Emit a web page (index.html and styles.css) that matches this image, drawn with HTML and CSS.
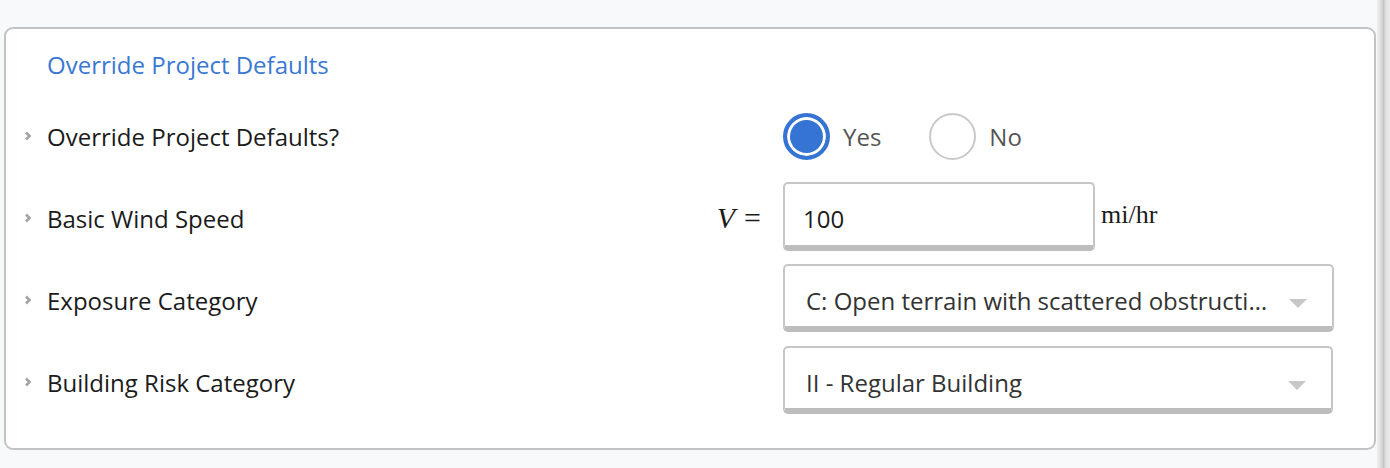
FILE: index.html
```html
<!DOCTYPE html>
<html lang="en">
<head>
  <meta charset="UTF-8">
  <meta name="viewport" content="width=device-width, initial-scale=1.0">
  <title>Wind Load Settings</title>
  <link rel="stylesheet" href="styles.css">
</head>
<body>
  <div class="page">
    <main class="main">
      <section class="card">
        <h2 class="card-title">Override Project Defaults</h2>

        <div class="row row-radio">
          <div class="label">
            <svg class="chev" width="8" height="12" viewBox="0 0 8 12"><polyline points="2,2.5 5.5,6 2,9.5" /></svg>
            <span>Override Project Defaults?</span>
          </div>
          <div class="control">
            <label class="radio">
              <span class="dot checked"></span>
              <span class="radio-text">Yes</span>
            </label>
            <label class="radio">
              <span class="dot"></span>
              <span class="radio-text">No</span>
            </label>
          </div>
        </div>

        <div class="row">
          <div class="label">
            <svg class="chev" width="8" height="12" viewBox="0 0 8 12"><polyline points="2,2.5 5.5,6 2,9.5" /></svg>
            <span>Basic Wind Speed</span>
          </div>
          <div class="math"><i>V</i><span class="eq">=</span></div>
          <div class="control">
            <div class="field"><input type="text" value="100"></div>
            <span class="unit">mi/hr</span>
          </div>
        </div>

        <div class="row">
          <div class="label">
            <svg class="chev" width="8" height="12" viewBox="0 0 8 12"><polyline points="2,2.5 5.5,6 2,9.5" /></svg>
            <span>Exposure Category</span>
          </div>
          <div class="control">
            <div class="select">
              <span class="select-text">C: Open terrain with scattered obstructions</span>
              <svg class="caret" width="18" height="9" viewBox="0 0 18 9"><polygon points="0,0 18,0 9,9" /></svg>
            </div>
          </div>
        </div>

        <div class="row">
          <div class="label">
            <svg class="chev" width="8" height="12" viewBox="0 0 8 12"><polyline points="2,2.5 5.5,6 2,9.5" /></svg>
            <span>Building Risk Category</span>
          </div>
          <div class="control">
            <div class="select">
              <span class="select-text">II - Regular Building</span>
              <svg class="caret" width="18" height="9" viewBox="0 0 18 9"><polygon points="0,0 18,0 9,9" /></svg>
            </div>
          </div>
        </div>
      </section>
    </main>
    <div class="edge"></div>
  </div>
</body>
</html>
```

FILE: styles.css
```css
html, body {
  margin: 0;
  padding: 0;
}
body {
  font-family: "Open Sans", "Noto Sans", Arial, sans-serif;
  background: #f8f9fb;
  color: #1b1b1b;
}
.page {
  display: flex;
  height: 468px;
}
.main {
  flex: 1;
  padding: 27px 1px 0 4px;
}
.edge {
  width: 13px;
  background: linear-gradient(to right, #f1f1f1 0%, #d9d9d9 35%, #c6c6c6 50%, #e2e2e2 70%, #ececec 100%);
}
.card {
  background: #fff;
  border: 2px solid #c3c3c3;
  border-radius: 9px;
  height: 423px;
  box-sizing: border-box;
  padding: 21px 41px 0 41px;
}
.card-title {
  margin: 0 0 19px 0;
  font-size: 24px;
  font-weight: 400;
  color: #3a78d4;
  line-height: 30px;
}
.row {
  display: flex;
  align-items: center;
  height: 68px;
  margin-bottom: 14px;
}
.row-radio {
  height: 74px;
  margin-bottom: 9px;
}
.label {
  flex: 1;
  display: flex;
  align-items: center;
  font-size: 24px;
  position: relative;
  top: 2px;
}
.row-radio .label {
  top: 0;
}
.chev {
  margin-left: -23px;
  margin-right: 15px;
}
.chev polyline {
  fill: none;
  stroke: #a3a3a3;
  stroke-width: 2.6;
}
.control {
  width: 550px;
  display: flex;
  align-items: center;
}
.radio {
  display: flex;
  align-items: center;
  margin-right: 48px;
}
.dot {
  width: 47px;
  height: 47px;
  box-sizing: border-box;
  border-radius: 50%;
  border: 2px solid #c9c9c9;
  background: #fff;
  margin-right: 13px;
}
.dot.checked {
  border: 4px solid #3574d3;
  background: #3574d3;
  box-shadow: inset 0 0 0 3px #fff;
}
.radio-text {
  font-size: 24px;
  color: #555;
}
.math {
  font-family: "Liberation Serif", "DejaVu Serif", serif;
  font-size: 30px;
  margin-right: 22px;
  display: flex;
  align-items: center;
  position: relative;
  top: 2px;
}
.math i {
  margin-right: 9px;
}
.field {
  width: 312px;
  height: 69px;
  box-sizing: border-box;
  border: 2px solid #c6c6c6;
  border-bottom: 6px solid #bdbdbd;
  border-radius: 5px;
  display: flex;
  align-items: center;
}
.field input {
  border: none;
  outline: none;
  width: 100%;
  font-family: inherit;
  font-size: 24px;
  color: #1b1b1b;
  padding: 9px 0 0 18px;
  background: transparent;
}
.unit {
  font-family: "Liberation Serif", "DejaVu Serif", serif;
  font-size: 26px;
  margin-left: 6px;
  margin-top: -2px;
}
.select {
  width: 551px;
  height: 68px;
  box-sizing: border-box;
  border: 2px solid #c6c6c6;
  border-bottom: 6px solid #bdbdbd;
  border-radius: 5px;
  display: flex;
  align-items: center;
  padding: 8px 25px 0 21px;
}
.select-text {
  flex: 1;
  font-size: 24px;
  color: #333;
  white-space: nowrap;
  overflow: hidden;
  text-overflow: ellipsis;
  margin-right: 14px;
}
.caret polygon {
  fill: #c7c7c7;
}
.caret {
  margin-top: 6px;
}
```
